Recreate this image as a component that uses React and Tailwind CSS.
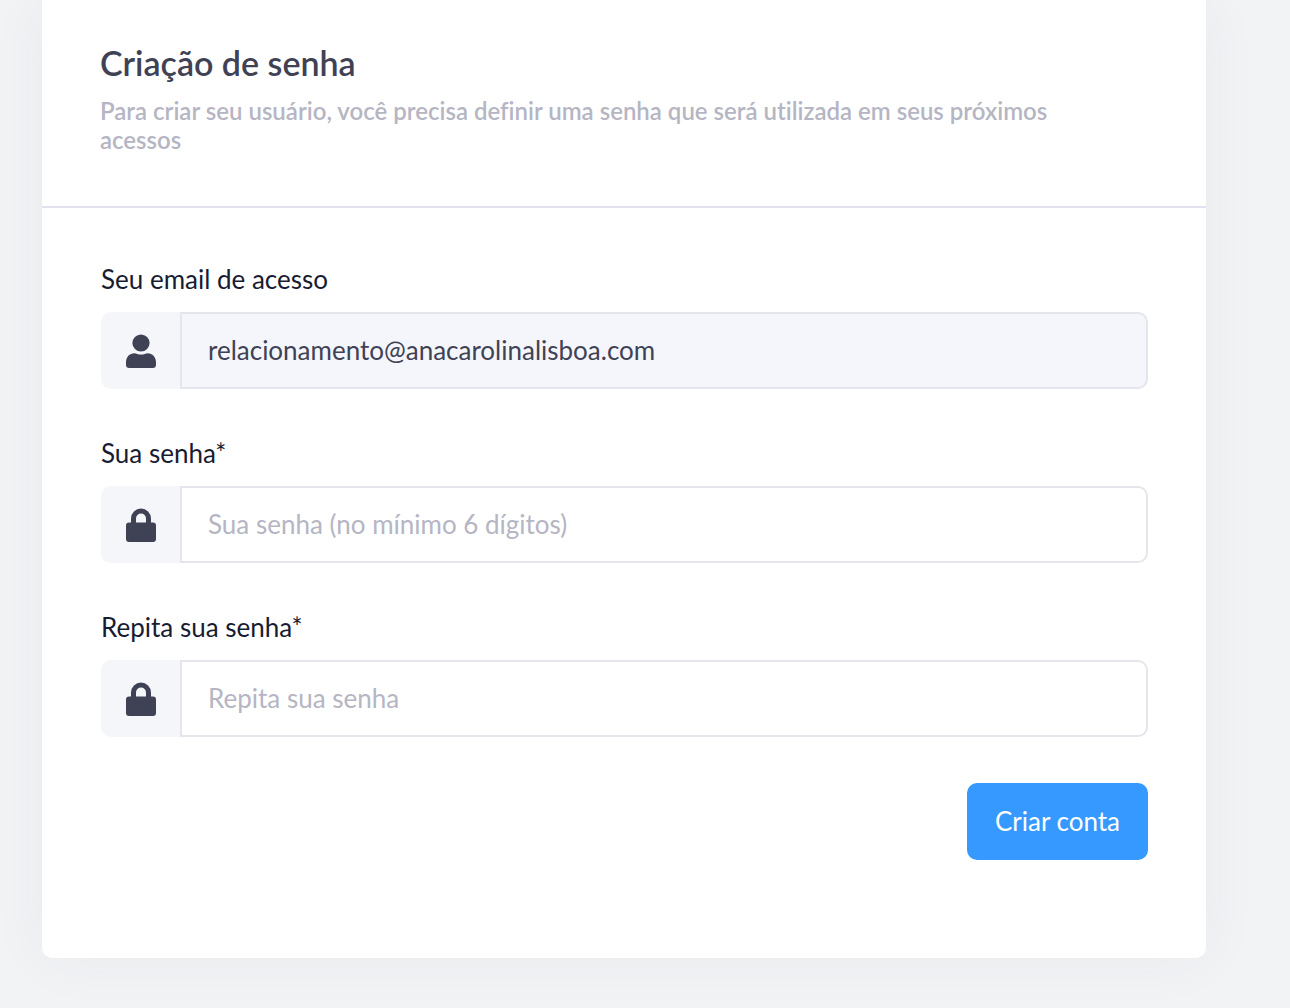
import { useId } from "react";

function PersonIcon() {
  return (
    <svg viewBox="0 0 32 36" className="h-9 w-8 fill-[#3f4254]" aria-hidden="true">
      <circle cx="16" cy="10" r="8.600" />
      <path d="M1 29.500C1 24 4.500 20.200 9.500 20.200c1.600 0 3.600 1.400 6.500 1.400s4.900-1.400 6.500-1.400c5 0 8.500 3.800 8.500 9.300V32c0 1.700-1.300 3-3 3H4c-1.700 0-3-1.300-3-3z" />
    </svg>
  );
}

function LockIcon() {
  return (
    <svg viewBox="0 0 32 36" className="h-9 w-8" aria-hidden="true">
      <path d="M8.500 17v-5.500a7.500 7.500 0 0 1 15 0V17" fill="none" stroke="#3f4254" strokeWidth="5" />
      <rect x="1" y="15.500" width="30" height="19.500" rx="3" fill="#3f4254" />
    </svg>
  );
}

function Field({ label, icon, inputClass = "bg-white", ...props }) {
  const id = useId();
  return (
    <div>
      <label htmlFor={id} className="mb-[17px] block text-[26px] leading-8 text-[#181c32]">
        {label}
      </label>
      <div className="flex h-[77px]">
        <span className="flex w-[79px] shrink-0 items-center justify-center rounded-l-[10px] bg-[#f4f6fa]">
          {icon}
        </span>
        <input
          id={id}
          {...props}
          className={`min-w-0 flex-1 rounded-r-[10px] border-2 border-[#e4e6ec] px-[26px] text-[26px] text-[#3f4254] outline-none placeholder:text-[#b5b5c3] ${inputClass}`}
        />
      </div>
    </div>
  );
}

export default function App() {
  return (
    <div className="min-h-screen bg-[#f1f3f5] pr-[84px] pb-[50px] pl-[42px] font-['Lato',sans-serif] [font-variant-ligatures:none]">
      <main className="rounded-b-[10px] bg-white shadow-[0_0_60px_rgba(60,63,85,0.05)]">
        <header className="border-b-2 border-[#e1e1ef] px-[58px] pt-[43px] pb-[52px]">
          <h1 className="text-[34px] leading-10 font-semibold text-[#3f4254]">Criação de senha</h1>
          <p className="mt-[13px] pr-12 text-[24px] leading-[29px] font-semibold text-[#b5b5c3]">
            Para criar seu usuário, você precisa definir uma senha que será utilizada em seus próximos acessos
          </p>
        </header>
        <form className="pt-[55px] pr-[58px] pb-[98px] pl-[59px]" onSubmit={(e) => e.preventDefault()}>
          <div className="flex flex-col gap-12">
            <Field
              label="Seu email de acesso"
              icon={<PersonIcon />}
              type="email"
              readOnly
              defaultValue="relacionamento@anacarolinalisboa.com"
              inputClass="bg-[#f4f6fb]"
            />
            <Field label="Sua senha*" icon={<LockIcon />} type="password" placeholder="Sua senha (no mínimo 6 dígitos)" />
            <Field label="Repita sua senha*" icon={<LockIcon />} type="password" placeholder="Repita sua senha" />
          </div>
          <div className="mt-[46px] flex justify-end">
            <button type="submit" className="h-[77px] rounded-[10px] bg-[#3699ff] px-7 text-[26px] text-white">
              Criar conta
            </button>
          </div>
        </form>
      </main>
    </div>
  );
}
